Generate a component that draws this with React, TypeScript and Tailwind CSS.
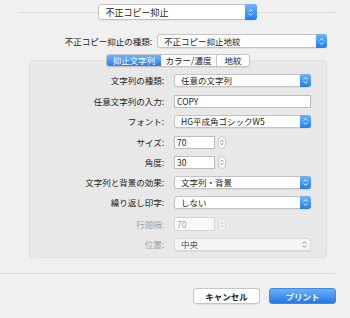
import type { ReactNode } from "react";

const FONT = { fontFamily: '"Noto Sans CJK JP", "Noto Sans", sans-serif' };

function Chevrons({ color = "#ffffff", w = 5, h = 9 }: { color?: string; w?: number; h?: number }) {
  return (
    <svg width={w} height={h} viewBox="0 0 5 9" fill="none" stroke={color} strokeWidth={0.9} strokeLinecap="round" strokeLinejoin="round">
      <path d="M1 3.2 L2.5 1.7 L4 3.2" />
      <path d="M1 5.8 L2.5 7.3 L4 5.8" />
    </svg>
  );
}

function Popup({ text, disabled, className }: { text: string; disabled?: boolean; className?: string }) {
  return (
    <div
      className={`flex h-[13px] items-stretch rounded-[3px] border shadow-[0_0.5px_0.5px_rgba(0,0,0,0.1)] ${
        disabled ? "border-[#dadada] bg-[#f5f5f5] text-[#555]" : "border-[#c3c3c3] bg-white text-[#222]"
      } ${className ?? ""}`}
    >
      <span className="flex flex-1 items-center pl-[6px] leading-none">{text}</span>
      {disabled ? (
        <span className="flex w-[11px] items-center justify-center">
          <Chevrons color="#8a8a8a" />
        </span>
      ) : (
        <span className="-my-px -mr-px flex w-[11px] items-center justify-center rounded-r-[3px] bg-linear-to-b from-[#6fb4fb] to-[#1b7ff5]">
          <Chevrons />
        </span>
      )}
    </div>
  );
}

function Stepper({ disabled }: { disabled?: boolean }) {
  return (
    <div
      className={`flex h-[13px] w-[8px] items-center justify-center rounded-full border ${
        disabled ? "border-[#d8d8d8] bg-[#f5f5f5]" : "border-[#c3c3c3] bg-white"
      }`}
    >
      <Chevrons color={disabled ? "#a0a0a0" : "#555555"} w={4} h={9} />
    </div>
  );
}

function Field({ value, disabled, className }: { value: string; disabled?: boolean; className?: string }) {
  return (
    <div
      className={`flex h-[13px] items-center border pl-[2px] leading-none ${
        disabled ? "border-[#d5d5d5] bg-[#f8f8f8] text-[#a5a5a5]" : "border-[#bdbdbd] bg-white text-[#222]"
      } ${className ?? ""}`}
    >
      {value}
    </div>
  );
}

function Row({ label, disabled, className, children }: { label: string; disabled?: boolean; className?: string; children: ReactNode }) {
  return (
    <div className={`flex items-center ${className ?? ""}`}>
      <span className={`w-[134px] text-right leading-none ${disabled ? "text-[#a3a3a3]" : "text-[#222]"}`}>{label}</span>
      <div className="ml-[10px] flex flex-1 items-center gap-[3px]">{children}</div>
    </div>
  );
}

export default function App() {
  return (
    <div className="h-[318px] w-[350px] overflow-hidden bg-[#f0f0f0] text-[8.5px]" style={FONT}>
      {/* preset header */}
      <div className="flex items-center pl-[19px] pr-[15px] pt-[4px]">
        <div className="h-px flex-1 bg-[#dadada]" />
        <div className="flex h-[16px] w-[159px] items-stretch rounded-[3px] border border-[#c3c3c3] bg-white text-[9px] text-[#222] shadow-[0_0.5px_0.5px_rgba(0,0,0,0.1)]">
          <span className="flex flex-1 items-center pl-[7px] leading-none">不正コピー抑止</span>
          <span className="-my-px -mr-px flex w-[12px] items-center justify-center rounded-r-[3px] bg-linear-to-b from-[#6fb4fb] to-[#1b7ff5]">
            <Chevrons />
          </span>
        </div>
        <div className="h-px flex-1 bg-[#dadada]" />
      </div>

      {/* type */}
      <div className="mt-[14px] flex items-center">
        <span className="w-[152px] text-right leading-none text-[#222]">不正コピー抑止の種類:</span>
        <Popup text="不正コピー抑止地紋" className="ml-[5px] w-[170px] h-[14px]" />
      </div>

      {/* tabs + box */}
      <div className="ml-[29px] mt-[6px] w-[298px]">
        <div className="relative z-10 flex justify-center">
          <div className="flex h-[13px] overflow-hidden rounded-[3px] border border-[#c3c3c3] bg-white text-[8.5px] leading-none shadow-[0_0.5px_0.5px_rgba(0,0,0,0.1)]">
            <span className="flex w-[54px] items-center justify-center bg-linear-to-b from-[#6fb4fb] to-[#1b7ff5] text-white">抑止文字列</span>
            <span className="flex w-[56px] items-center justify-center border-r border-[#c8c8c8] text-[#222]">カラー/濃度</span>
            <span className="flex w-[32px] items-center justify-center text-[#222]">地紋</span>
          </div>
        </div>
        <div className="-mt-[7px] rounded-[4px] border border-[#e0e0e0] bg-[#e8e8e8] pb-[6px] pr-[15px] pt-[13px]">
          <Row label="文字列の種類:">
            <Popup text="任意の文字列" className="flex-1" />
          </Row>
          <Row label="任意文字列の入力:" className="mt-[8px]">
            <Field value="COPY" className="flex-1" />
          </Row>
          <Row label="フォント:" className="mt-[7px]">
            <Popup text="HG平成角ゴシックW5" className="flex-1" />
          </Row>
          <Row label="サイズ:" className="mt-[8px]">
            <Field value="70" className="w-[41px]" />
            <Stepper />
          </Row>
          <Row label="角度:" className="mt-[7px]">
            <Field value="30" className="w-[41px]" />
            <Stepper />
          </Row>
          <Row label="文字列と背景の効果:" className="mt-[7px]">
            <Popup text="文字列・背景" className="flex-1" />
          </Row>
          <Row label="繰り返し印字:" className="mt-[7px]">
            <Popup text="しない" className="flex-1" />
          </Row>
          <Row label="行間隔:" disabled className="mt-[8px]">
            <Field value="70" disabled className="h-[14px] w-[41px]" />
            <Stepper disabled />
          </Row>
          <Row label="位置:" disabled className="mt-[7px]">
            <Popup text="中央" disabled className="flex-1" />
          </Row>
        </div>
      </div>

      {/* separator */}
      <div className="mt-[15px] h-px w-[335px] bg-[#dcdcdc]" />

      {/* buttons */}
      <div className="mt-[14px] flex justify-end gap-[9px] pr-[14px] text-[8.5px] font-bold leading-none">
        <button className="flex h-[16px] w-[67px] items-center justify-center rounded-[3px] border border-[#c6c6c6] bg-white text-[#222] shadow-[0_0.5px_0.5px_rgba(0,0,0,0.1)]">
          キャンセル
        </button>
        <button className="flex h-[16px] w-[67px] items-center justify-center rounded-[3px] border border-[#3d8be6] bg-linear-to-b from-[#6bb0f8] to-[#1f7ae6] text-[#f2f7ff]">
          プリント
        </button>
      </div>
    </div>
  );
}
